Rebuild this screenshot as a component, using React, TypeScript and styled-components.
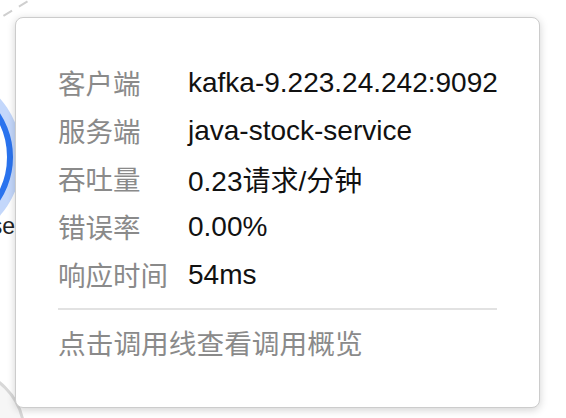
import React from "react";
import styled, { createGlobalStyle } from "styled-components";

const Global = createGlobalStyle`
  html, body { margin: 0; padding: 0; background: #ffffff; }
  body { font-family: "Liberation Sans", "Noto Sans CJK SC", sans-serif; }
`;

const Stage = styled.div`
  position: relative;
  width: 566px;
  height: 418px;
  overflow: hidden;
  background: #ffffff;
`;

const Graph = styled.svg`
  position: absolute;
  left: 0;
  top: 0;
  width: 566px;
  height: 418px;
`;

const Tooltip = styled.div`
  position: absolute;
  left: 15px;
  top: 17px;
  width: 525px;
  height: 391px;
  box-sizing: border-box;
  padding: 41px 42px 0 42px;
  background: #ffffff;
  border: 1px solid #cccccc;
  border-radius: 8px;
  box-shadow: 0 2px 8px rgba(0, 0, 0, 0.18);
  display: flex;
  flex-direction: column;
`;

const Rows = styled.div`
  display: grid;
  grid-template-columns: 130px 1fr;
  grid-auto-rows: 48px;
  align-items: center;
`;

const Label = styled.div`
  font-size: 27.5px;
  color: #8a8a8a;
  white-space: nowrap;
  margin-top: -3px;
`;

const Value = styled.div`
  font-size: 28px;
  color: #111111;
  white-space: nowrap;
`;

const Divider = styled.div`
  height: 2px;
  background: #e2e2e2;
  margin-top: 9px;
`;

const Footer = styled.div`
  margin-top: 11px;
  line-height: 48px;
  font-size: 27.7px;
  color: #8a8a8a;
  white-space: nowrap;
`;

const rows: [string, string][] = [
  ["客户端", "kafka-9.223.24.242:9092"],
  ["服务端", "java-stock-service"],
  ["吞吐量", "0.23请求/分钟"],
  ["错误率", "0.00%"],
  ["响应时间", "54ms"],
];

export default function App() {
  return (
    <Stage>
      <Global />
      <Graph viewBox="0 0 566 418">
        <line
          x1={-12}
          y1={25}
          x2={60}
          y2={-18}
          stroke="#cfcfcf"
          strokeWidth={2}
          strokeDasharray="10 8"
        />
        <circle cx={-67} cy={157} r={89} fill="#c3d7fb" />
        <circle cx={-67} cy={157} r={77} fill="#ffffff" stroke="#2a73ee" strokeWidth={6} />
        <text
          x={15}
          y={234}
          textAnchor="end"
          fontSize={23}
          fill="#222222"
          fontFamily="Liberation Sans, sans-serif"
        >
          base
        </text>
        <circle cx={-40} cy={433} r={64} fill="#f6f6f6" stroke="#d8d8d8" strokeWidth={3} />
      </Graph>
      <Tooltip>
        <Rows>
          {rows.map(([k, v]) => (
            <React.Fragment key={k}>
              <Label>{k}</Label>
              <Value>{v}</Value>
            </React.Fragment>
          ))}
        </Rows>
        <Divider />
        <Footer>点击调用线查看调用概览</Footer>
      </Tooltip>
    </Stage>
  );
}
